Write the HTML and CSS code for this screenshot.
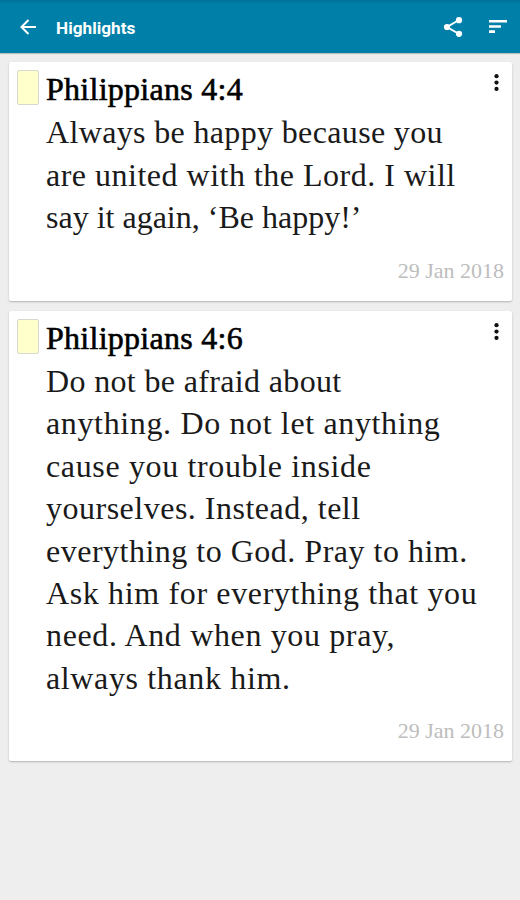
FILE: index.html
```html
<!DOCTYPE html>
<html lang="en">
<head>
    <meta charset="UTF-8">
    <meta name="viewport" content="width=device-width, initial-scale=1.0">
    <title>Highlights</title>
    <link rel="stylesheet" href="styles.css">
</head>
<body>
    <header class="toolbar">
        <svg class="icon-back" viewBox="0 0 16 16"><path d="M8.5 1 1.5 8l7 7M1.5 8H16"/></svg>
        <h1>Highlights</h1>
        <svg class="icon-share" viewBox="0 0 20 20">
            <path d="M16 3 4 10l12 7"/>
            <circle cx="16" cy="3.2" r="3.1"/>
            <circle cx="4" cy="10" r="3.1"/>
            <circle cx="16" cy="16.8" r="3.1"/>
        </svg>
        <svg class="icon-sort" viewBox="0 0 18 14"><path d="M0 0h18v2.6H0zM0 5.2h12v2.6H0zM0 10.3h6v2.6H0z"/></svg>
    </header>

    <main class="list">
        <article class="card">
            <div class="swatch"></div>
            <div class="content">
                <h2>Philippians 4:4</h2>
                <p>
                    <span class="line snug">Always be happy because you</span>
                    <span class="line">are united with the Lord. I will</span>
                    <span class="line tight">say it again, ‘Be happy!’</span>
                </p>
            </div>
            <svg class="icon-more" viewBox="0 0 4 16"><circle cx="2" cy="2" r="2"/><circle cx="2" cy="8" r="2"/><circle cx="2" cy="14" r="2"/></svg>
            <time>29 Jan 2018</time>
        </article>

        <article class="card">
            <div class="swatch"></div>
            <div class="content">
                <h2>Philippians 4:6</h2>
                <p>
                    <span class="line snug">Do not be afraid about</span>
                    <span class="line loose">anything. Do not let anything</span>
                    <span class="line loose">cause you trouble inside</span>
                    <span class="line">yourselves. Instead, tell</span>
                    <span class="line">everything to God. Pray to him.</span>
                    <span class="line loose">Ask him for everything that you</span>
                    <span class="line loose">need. And when you pray,</span>
                    <span class="line loose">always thank him.</span>
                </p>
            </div>
            <svg class="icon-more" viewBox="0 0 4 16"><circle cx="2" cy="2" r="2"/><circle cx="2" cy="8" r="2"/><circle cx="2" cy="14" r="2"/></svg>
            <time>29 Jan 2018</time>
        </article>
    </main>
</body>
</html>
```
FILE: styles.css
```css
body {
    margin: 0;
    min-height: 100vh;
    background-color: #eeeeee;
    font-family: "Liberation Serif", serif;
    color: #1a1a1a;
}

.toolbar {
    display: flex;
    align-items: center;
    box-sizing: border-box;
    height: 53px;
    padding: 1px 13px 0 20px;
    background: linear-gradient(#006f96, #0080a9 4px);
    box-shadow: 0 1px 1px rgba(0, 0, 0, 0.2);
}

.toolbar h1 {
    flex: 1;
    margin: 1px 0 0 20px;
    color: white;
    font-family: Roboto, sans-serif;
    font-size: 17.2px;
    font-weight: 700;
}

.toolbar svg {
    fill: white;
}

.icon-back {
    width: 16px;
    height: 16px;
}

.toolbar path {
    stroke: white;
    stroke-width: 2;
}

.icon-back path {
    fill: none;
}

.icon-share {
    width: 20px;
    height: 20px;
    margin-right: 26px;
}

.icon-share path {
    fill: none;
}

.icon-sort {
    width: 18px;
    height: 14px;
}

.toolbar .icon-sort path {
    stroke: none;
}

.list {
    display: flex;
    flex-direction: column;
    gap: 10px;
    padding: 9px 8px 0 9px;
}

.card {
    display: grid;
    grid-template-columns: 21px 1fr 4px;
    column-gap: 8px;
    padding: 7px 8px 17px;
    border-radius: 2px;
    background-color: white;
    box-shadow: 0 1px 2px rgba(0, 0, 0, 0.25);
}

.swatch {
    box-sizing: border-box;
    width: 22px;
    height: 35px;
    margin-top: 1px;
    border: 1px solid #d8d8cf;
    border-radius: 2px;
    background-color: #ffffcc;
}

h2 {
    margin: -1px 0 1px;
    font-size: 32px;
    font-weight: 400;
    line-height: 42.4px;
    letter-spacing: 0.27px;
    white-space: nowrap;
    color: black;
    -webkit-text-stroke: 0.6px black;
}

p {
    margin: 0;
    font-size: 32px;
    line-height: 42.4px;
}

.line {
    display: block;
    letter-spacing: 0.5px;
    white-space: nowrap;
}

.tight {
    letter-spacing: 0;
}

.snug {
    letter-spacing: 0.35px;
}

.loose {
    letter-spacing: 0.64px;
}

.icon-more {
    width: 5px;
    height: 17px;
    margin: 5px 0 0 -6px;
    fill: #111;
}

time {
    grid-column: 1 / -1;
    margin-top: 19px;
    color: #bdbdbd;
    font-size: 22px;
    line-height: 26px;
    text-align: right;
}
```
